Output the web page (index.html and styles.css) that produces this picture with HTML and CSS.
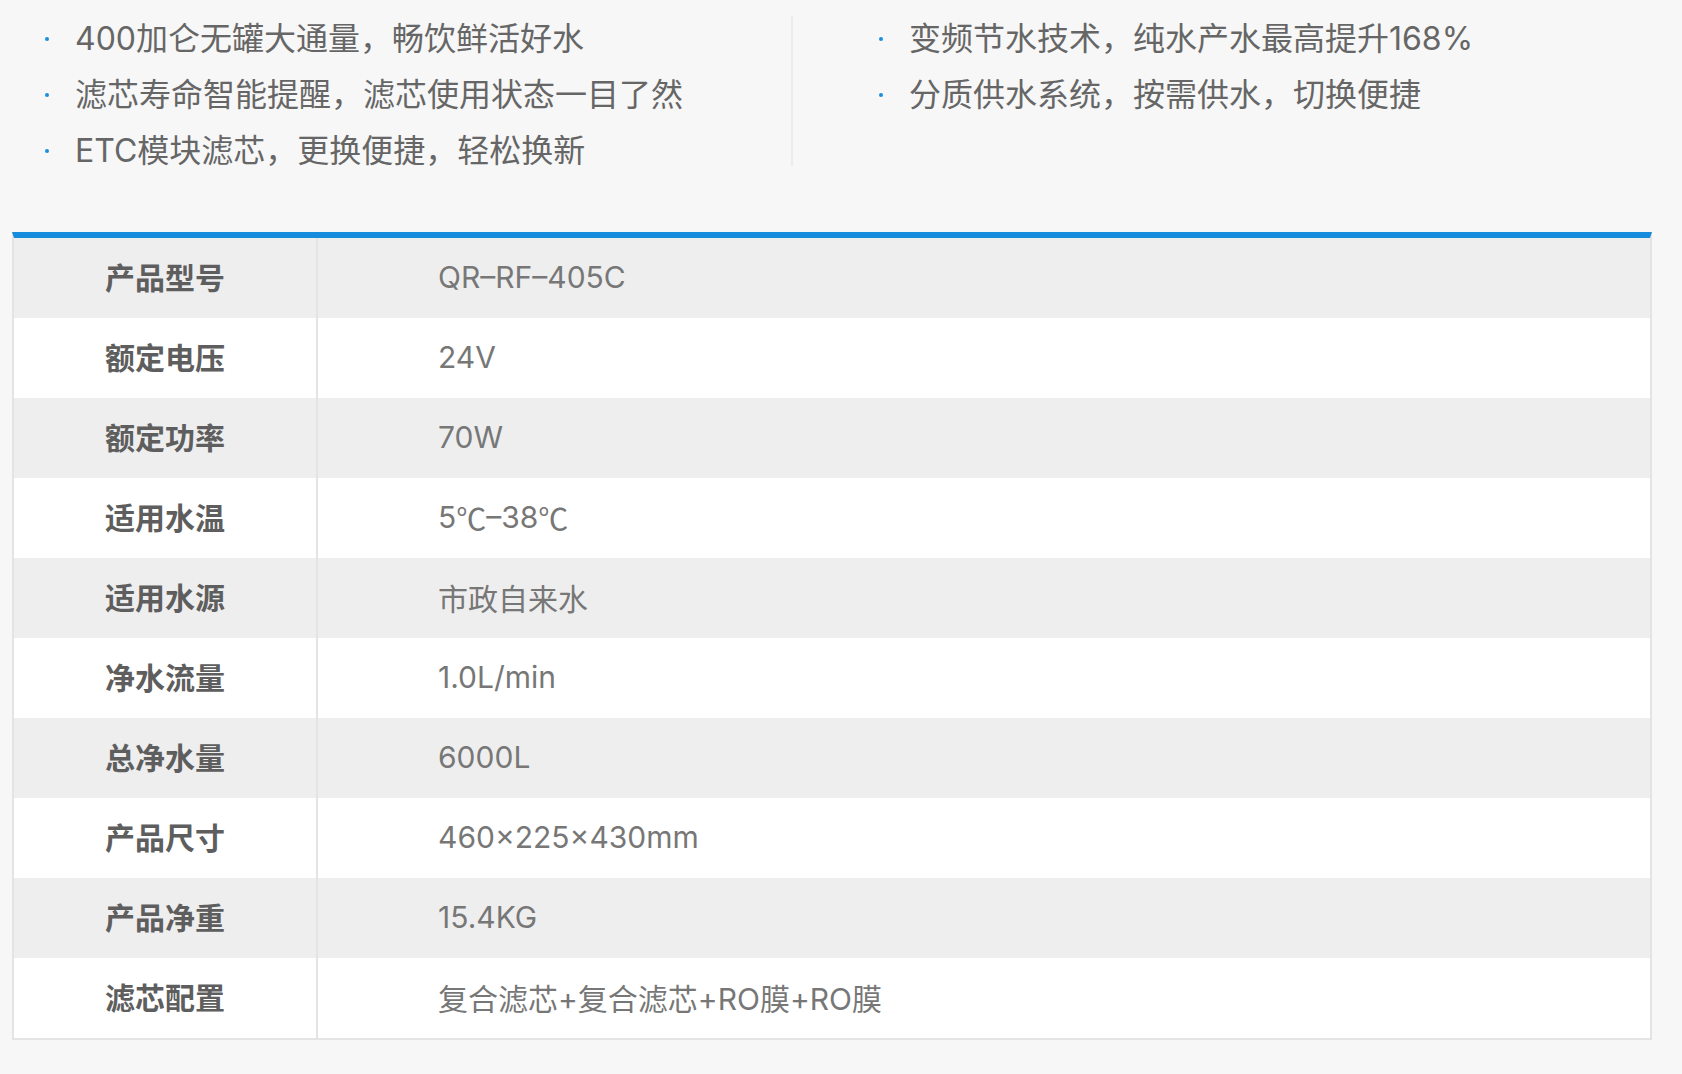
FILE: index.html
```html
<!DOCTYPE html>
<html lang="zh-CN">
<head>
<meta charset="utf-8">
<title>产品参数</title>
<link rel="stylesheet" href="styles.css">
</head>
<body>
<div class="page">
  <section class="features">
    <ul class="feat-list feat-left">
      <li>400加仑无罐大通量，畅饮鲜活好水</li>
      <li>滤芯寿命智能提醒，滤芯使用状态一目了然</li>
      <li>ETC模块滤芯，更换便捷，轻松换新</li>
    </ul>
    <div class="feat-divider"></div>
    <ul class="feat-list feat-right">
      <li>变频节水技术，纯水产水最高提升168%</li>
      <li>分质供水系统，按需供水，切换便捷</li>
    </ul>
  </section>

  <div class="specs">
    <div class="spec-row"><div class="spec-label">产品型号</div><div class="spec-value">QR–RF–405C</div></div>
    <div class="spec-row"><div class="spec-label">额定电压</div><div class="spec-value">24V</div></div>
    <div class="spec-row"><div class="spec-label">额定功率</div><div class="spec-value">70W</div></div>
    <div class="spec-row"><div class="spec-label">适用水温</div><div class="spec-value">5<span class="cjk">℃</span>–38<span class="cjk">℃</span></div></div>
    <div class="spec-row"><div class="spec-label">适用水源</div><div class="spec-value">市政自来水</div></div>
    <div class="spec-row"><div class="spec-label">净水流量</div><div class="spec-value">1.0L/min</div></div>
    <div class="spec-row"><div class="spec-label">总净水量</div><div class="spec-value">6000L</div></div>
    <div class="spec-row"><div class="spec-label">产品尺寸</div><div class="spec-value">460×225×430mm</div></div>
    <div class="spec-row"><div class="spec-label">产品净重</div><div class="spec-value">15.4KG</div></div>
    <div class="spec-row"><div class="spec-label">滤芯配置</div><div class="spec-value">复合滤芯+复合滤芯+RO膜+RO膜</div></div>
  </div>
</div>
</body>
</html>
```

FILE: styles.css
```css
html, body {
  margin: 0;
  padding: 0;
  background: #f7f7f7;
}

body {
  font-family: Inter, "Noto Sans CJK SC", sans-serif;
  color: #666666;
}

.page {
  width: 1640px;
  margin-left: 12px;
}

.features {
  display: flex;
  align-items: flex-start;
  height: 232px;
}

.feat-list {
  list-style: none;
  margin: 0;
  padding: 11px 0 0 0;
}

.feat-list li {
  position: relative;
  font-size: 32px;
  line-height: 56px;
  height: 56px;
  white-space: nowrap;
  color: #666666;
}

.feat-list li::before {
  content: "";
  position: absolute;
  width: 4px;
  height: 4px;
  border-radius: 50%;
  background: #1a8fe0;
  left: -30px;
  top: 26px;
}

.feat-left {
  width: 716px;
  padding-left: 63px;
}

.feat-divider {
  width: 2px;
  height: 150px;
  margin-top: 16px;
  background: #ececec;
}

.feat-right {
  padding-left: 116px;
}

.specs {
  border: 2px solid #e4e4e4;
  border-top: 6px solid #158cdc;
}

.spec-row {
  display: flex;
  height: 80px;
  align-items: stretch;
  background: #ffffff;
}

.spec-row:nth-child(odd) {
  background: #eeeeee;
}

.spec-label {
  width: 304px;
  flex: none;
  border-right: 2px solid #e4e4e4;
  display: flex;
  align-items: center;
  justify-content: center;
  padding-bottom: 5px;
  box-sizing: border-box;
  font-size: 30px;
  font-weight: 700;
  color: #5e5e5e;
}

.spec-value {
  flex: 1;
  display: flex;
  align-items: center;
  padding-left: 120px;
  padding-bottom: 2px;
  font-size: 30px;
  color: #777777;
  white-space: pre;
}

.cjk {
  font-family: "Noto Sans CJK SC", sans-serif;
}
```
